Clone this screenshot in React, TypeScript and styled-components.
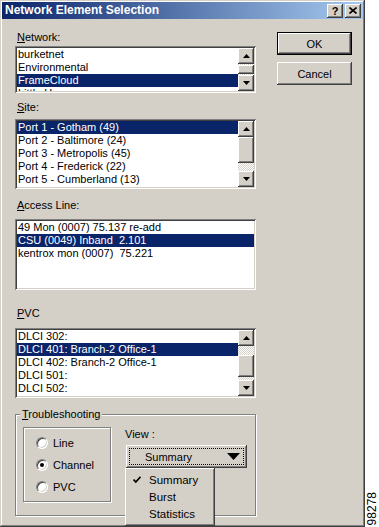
import React from 'react';
import styled, { createGlobalStyle, css } from 'styled-components';

const GlobalStyle = createGlobalStyle`
  html, body {
    margin: 0;
    padding: 0;
    background: #fff;
  }
  body {
    font-family: "Liberation Sans", Arial, sans-serif;
    font-size: 11px;
    color: #000;
  }
`;

const raised = css`
  background: #d4d0c8;
  box-shadow: inset -1px -1px #404040, inset 1px 1px #fff, inset -2px -2px #808080,
    inset 2px 2px #d4d0c8;
`;

const etched = css`
  border: 1px solid #808080;
  box-shadow: 1px 1px 0 #fff, inset 1px 1px 0 #fff;
`;

const Page = styled.div`
  display: flex;
  width: 379px;
  height: 527px;
  overflow: hidden;
`;

const Window = styled.div`
  width: 365px;
  height: 527px;
  flex-shrink: 0;
  box-sizing: border-box;
  padding: 2px;
  background: #d4d0c8;
  box-shadow: inset -1px -1px #404040, inset 1px 1px #d4d0c8, inset -2px -2px #808080,
    inset 2px 2px #fff;
`;

const TitleBar = styled.div`
  height: 17px;
  display: flex;
  align-items: center;
  padding: 0 2px 0 3px;
  background: linear-gradient(to right, #0a246a, #a6caf0);
`;

const TitleText = styled.div`
  flex: 1;
  color: #fff;
  font-weight: bold;
  font-size: 12px;
  line-height: 17px;
`;

const TitleButton = styled.div`
  width: 16px;
  height: 14px;
  margin-left: 2px;
  ${raised};
  display: flex;
  align-items: center;
  justify-content: center;
  font-weight: bold;
  font-size: 11px;
  line-height: 14px;
`;

const Body = styled.div`
  display: grid;
  grid-template-columns: 241px 75px;
  column-gap: 21px;
  align-items: start;
  padding: 12px 0 0 13px;
`;

const LeftColumn = styled.div`
  display: flex;
  flex-direction: column;
`;

const ButtonColumn = styled.div`
  display: flex;
  flex-direction: column;
  gap: 7px;
  margin-top: 1px;
`;

const PushButton = styled.div<{ $default?: boolean }>`
  height: 23px;
  box-sizing: border-box;
  display: flex;
  align-items: center;
  justify-content: center;
  ${raised};
  ${p =>
    p.$default &&
    css`
      border: 1px solid #000;
    `}
`;

const Label = styled.div<{ $mt: number }>`
  margin-top: ${p => p.$mt}px;
  line-height: 13px;
  padding-left: 2px;
  u {
    text-decoration: underline;
    text-underline-offset: 1px;
  }
`;

const ListBox = styled.div<{ $h: number; $mt: number }>`
  margin-top: ${p => p.$mt}px;
  height: ${p => p.$h}px;
  box-sizing: border-box;
  padding: 2px;
  background: #fff;
  box-shadow: inset 1px 1px #808080, inset -1px -1px #fff, inset 2px 2px #404040,
    inset -2px -2px #d4d0c8;
  display: flex;
  overflow: hidden;
`;

const Items = styled.div`
  flex: 1;
  min-width: 0;
  overflow: hidden;
`;

const Item = styled.div<{ $sel?: boolean }>`
  height: 13px;
  line-height: 13px;
  padding-left: 1px;
  white-space: pre;
  background: ${p => (p.$sel ? '#0a246a' : 'transparent')};
  color: ${p => (p.$sel ? '#fff' : '#000')};
`;

const ScrollBar = styled.div`
  width: 16px;
  flex-shrink: 0;
  display: flex;
  flex-direction: column;
`;

const ScrollButton = styled.div`
  width: 16px;
  height: 16px;
  flex-shrink: 0;
  ${raised};
  display: flex;
  align-items: center;
  justify-content: center;
`;

const Track = styled.div`
  flex: 1;
  min-height: 0;
  background-color: #d4d0c8;
  background-image: conic-gradient(#fff 25%, #d4d0c8 0 50%, #fff 0 75%, #d4d0c8 0);
  background-size: 2px 2px;
`;

const Thumb = styled.div<{ $top: number; $h: number }>`
  margin-top: ${p => p.$top}px;
  height: ${p => p.$h}px;
  ${raised};
`;

const Group = styled.fieldset`
  margin: 10px 0 0;
  padding: 6px 0 0 7px;
  height: 108px;
  box-sizing: border-box;
  min-inline-size: 0;
  ${etched};
`;

const Legend = styled.legend`
  margin-left: -3px;
  padding: 0 2px;
  line-height: 13px;
  background: #d4d0c8;
  u {
    text-decoration: underline;
    text-underline-offset: 1px;
  }
`;

const GroupRow = styled.div`
  display: flex;
  align-items: flex-start;
`;

const RadioPanel = styled.div`
  width: 88px;
  height: 75px;
  box-sizing: border-box;
  padding: 4px 0 0 12px;
  ${etched};
  display: flex;
  flex-direction: column;
`;

const RadioRow = styled.div`
  height: 22px;
  display: flex;
  align-items: center;
  gap: 5px;
`;

const RadioCircle = styled.span<{ $checked?: boolean }>`
  width: 12px;
  height: 12px;
  box-sizing: border-box;
  border-radius: 50%;
  background: #fff;
  border: 1px solid;
  border-color: #808080 #fff #fff #808080;
  box-shadow: inset 1px 1px #404040, inset -1px -1px #d4d0c8;
  display: flex;
  align-items: center;
  justify-content: center;
  &::after {
    content: '';
    width: 4px;
    height: 4px;
    border-radius: 50%;
    background: ${p => (p.$checked ? '#000' : 'transparent')};
  }
`;

const ViewArea = styled.div`
  margin-left: 14px;
  display: flex;
  flex-direction: column;
  padding-top: 1px;
`;

const ViewLabel = styled.div`
  line-height: 13px;
`;

const DropWrap = styled.div`
  position: relative;
  margin: 4px 0 0 1px;
`;

const DropButton = styled.div`
  width: 121px;
  height: 23px;
  box-sizing: border-box;
  padding: 3px;
  ${raised};
`;

const FocusRect = styled.div`
  height: 100%;
  box-sizing: border-box;
  border: 1px dotted #000;
  display: flex;
  align-items: center;
  justify-content: space-between;
  padding: 0 3px 0 15px;
`;

const Menu = styled.div`
  position: absolute;
  left: -1px;
  top: 23px;
  width: 90px;
  height: 58px;
  box-sizing: border-box;
  padding: 3px 3px;
  ${raised};
  z-index: 2;
`;

const MenuItem = styled.div`
  height: 17px;
  display: flex;
  align-items: center;
  position: relative;
  padding-left: 21px;
  font-size: 11.5px;
`;

const Check = styled.svg`
  position: absolute;
  left: 5px;
  top: 5px;
`;

const Side = styled.div`
  flex: 1;
  display: flex;
  flex-direction: column;
  justify-content: flex-end;
  align-items: center;
  padding-bottom: 2px;
`;

const FigureNo = styled.div`
  writing-mode: vertical-rl;
  transform: rotate(180deg);
  font-size: 12px;
  line-height: 12px;
`;

const ArrowIcon = ({ dir }: { dir: 'up' | 'down' }) => (
  <svg width="7" height="4" viewBox="0 0 7 4">
    <polygon points={dir === 'up' ? '3.5,0 7,4 0,4' : '0,0 7,0 3.5,4'} fill="#000" />
  </svg>
);

type ListProps = {
  items: string[];
  selected: number;
  height: number;
  mt: number;
  scroll?: { top: number; h: number };
};

const List = ({ items, selected, height, mt, scroll }: ListProps) => (
  <ListBox $h={height} $mt={mt}>
    <Items>
      {items.map((t, i) => (
        <Item key={t} $sel={i === selected}>
          {t}
        </Item>
      ))}
    </Items>
    {scroll && (
      <ScrollBar>
        <ScrollButton>
          <ArrowIcon dir="up" />
        </ScrollButton>
        <Track>
          <Thumb $top={scroll.top} $h={scroll.h} />
        </Track>
        <ScrollButton>
          <ArrowIcon dir="down" />
        </ScrollButton>
      </ScrollBar>
    )}
  </ListBox>
);

const App = () => {
  return (
    <Page>
      <GlobalStyle />
      <Window>
        <TitleBar>
          <TitleText>Network Element Selection</TitleText>
          <TitleButton>?</TitleButton>
          <TitleButton>
            <svg width="8" height="7" viewBox="0 0 8 7">
              <path d="M0.5 0.5 L7.5 6.5 M7.5 0.5 L0.5 6.5" stroke="#000" strokeWidth="1.6" />
            </svg>
          </TitleButton>
        </TitleBar>
        <Body>
          <LeftColumn>
            <Label $mt={0}>
              <u>N</u>etwork:
            </Label>
            <List
              mt={2}
              height={47}
              selected={2}
              items={['burketnet', 'Environmental', 'FrameCloud', 'Little Hummer']}
              scroll={{ top: 1, h: 9 }}
            />
            <Label $mt={8}>
              <u>S</u>ite:
            </Label>
            <List
              mt={5}
              height={70}
              selected={0}
              items={[
                'Port 1 - Gotham (49)',
                'Port 2 - Baltimore (24)',
                'Port 3 - Metropolis (45)',
                'Port 4 - Frederick (22)',
                'Port 5 - Cumberland (13)',
                'Port 6 - Ellicott City (14)',
              ]}
              scroll={{ top: 0, h: 26 }}
            />
            <Label $mt={10}>
              <u>A</u>ccess Line:
            </Label>
            <List
              mt={7}
              height={71}
              selected={1}
              items={['49 Mon (0007) 75.137 re-add', 'CSU (0049) Inband  2.101', 'kentrox mon (0007)  75.221']}
            />
            <Label $mt={17}>
              <u>P</u>VC
            </Label>
            <List
              mt={8}
              height={70}
              selected={1}
              items={[
                'DLCI 302:',
                'DLCI 401: Branch-2 Office-1',
                'DLCI 402: Branch-2 Office-1',
                'DLCI 501:',
                'DLCI 502:',
                'DLCI 503: Inband 2.101',
              ]}
              scroll={{ top: 9, h: 22 }}
            />
            <Group>
              <Legend>
                <u>T</u>roubleshooting
              </Legend>
              <GroupRow>
                <RadioPanel>
                  <RadioRow>
                    <RadioCircle />
                    Line
                  </RadioRow>
                  <RadioRow>
                    <RadioCircle $checked />
                    Channel
                  </RadioRow>
                  <RadioRow>
                    <RadioCircle />
                    PVC
                  </RadioRow>
                </RadioPanel>
                <ViewArea>
                  <ViewLabel>View :</ViewLabel>
                  <DropWrap>
                    <DropButton>
                      <FocusRect>
                        <span>Summary</span>
                        <svg width="13" height="7" viewBox="0 0 13 7">
                          <polygon points="0,0 13,0 6.5,7" fill="#000" />
                        </svg>
                      </FocusRect>
                    </DropButton>
                    <Menu>
                      <MenuItem>
                        <Check width="8" height="8" viewBox="0 0 8 8">
                          <path d="M0.5 3.5 L2.8 6 L7.5 0.8" stroke="#000" strokeWidth="1.8" fill="none" />
                        </Check>
                        Summary
                      </MenuItem>
                      <MenuItem>Burst</MenuItem>
                      <MenuItem>Statistics</MenuItem>
                    </Menu>
                  </DropWrap>
                </ViewArea>
              </GroupRow>
            </Group>
          </LeftColumn>
          <ButtonColumn>
            <PushButton $default>OK</PushButton>
            <PushButton>Cancel</PushButton>
          </ButtonColumn>
        </Body>
      </Window>
      <Side>
        <FigureNo>98278</FigureNo>
      </Side>
    </Page>
  );
};

export default App;
